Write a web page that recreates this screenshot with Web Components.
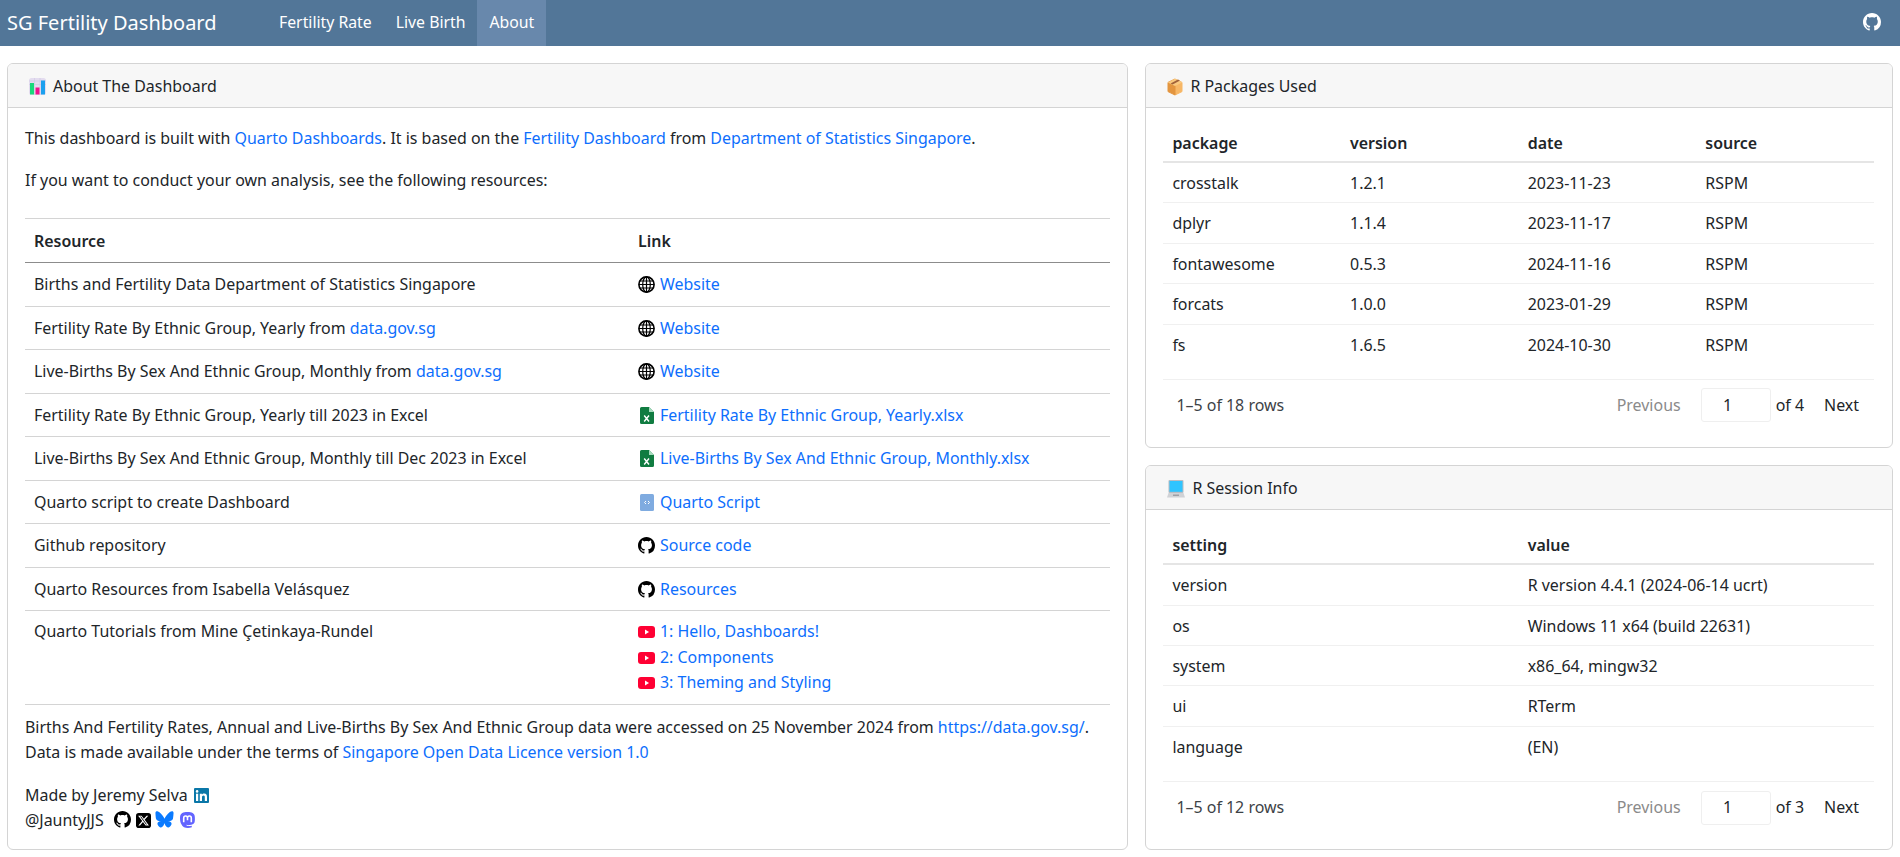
<!DOCTYPE html>
<html lang="en">
<head>
<meta charset="utf-8">
<title>SG Fertility Dashboard</title>
<style>
    html, body { margin: 0; height: 100%; }
    body {
        font-family: "Noto Sans", "Open Sans", sans-serif;
        font-size: 15.95px;
        line-height: 25px;
        color: #212529;
        background: #fff;
        overflow: hidden;
    }
    a { color: #0d6efd; text-decoration: none; }
    p { margin: 0 0 17px; }
</style>
</head>
<body>
<dash-page>
    <dash-navbar slot="nav" brand="SG Fertility Dashboard">
        <nav-item>Fertility Rate</nav-item>
        <nav-item>Live Birth</nav-item>
        <nav-item active>About</nav-item>
    </dash-navbar>

    <dash-card slot="left" heading="About The Dashboard" icon="chart">
        <p>This dashboard is built with <a href="#">Quarto Dashboards</a>. It is based on the <a href="#">Fertility Dashboard</a> from <a href="#">Department of Statistics Singapore</a>.</p>
        <p>If you want to conduct your own analysis, see the following resources:</p>
        <resource-table>
            <resource-row head><span>Resource</span><span slot="link">Link</span></resource-row>
            <resource-row><span>Births and Fertility Data Department of Statistics Singapore</span><icon-link slot="link" icon="globe">Website</icon-link></resource-row>
            <resource-row><span>Fertility Rate By Ethnic Group, Yearly from <a href="#">data.gov.sg</a></span><icon-link slot="link" icon="globe">Website</icon-link></resource-row>
            <resource-row><span>Live-Births By Sex And Ethnic Group, Monthly from <a href="#">data.gov.sg</a></span><icon-link slot="link" icon="globe">Website</icon-link></resource-row>
            <resource-row><span>Fertility Rate By Ethnic Group, Yearly till 2023 in Excel</span><icon-link slot="link" icon="excel">Fertility Rate By Ethnic Group, Yearly.xlsx</icon-link></resource-row>
            <resource-row><span>Live-Births By Sex And Ethnic Group, Monthly till Dec 2023 in Excel</span><icon-link slot="link" icon="excel">Live-Births By Sex And Ethnic Group, Monthly.xlsx</icon-link></resource-row>
            <resource-row><span>Quarto script to create Dashboard</span><icon-link slot="link" icon="script">Quarto Script</icon-link></resource-row>
            <resource-row><span>Github repository</span><icon-link slot="link" icon="github">Source code</icon-link></resource-row>
            <resource-row><span>Quarto Resources from Isabella Velásquez</span><icon-link slot="link" icon="github">Resources</icon-link></resource-row>
            <resource-row tall><span>Quarto Tutorials from Mine Çetinkaya-Rundel</span>
                <icon-link slot="link" icon="youtube">1: Hello, Dashboards!</icon-link>
                <icon-link slot="link" icon="youtube">2: Components</icon-link>
                <icon-link slot="link" icon="youtube">3: Theming and Styling</icon-link>
            </resource-row>
        </resource-table>
        <p style="margin-bottom:18px">Births And Fertility Rates, Annual and Live-Births By Sex And Ethnic Group data were accessed on 25 November 2024 from <a href="#">https://data.gov.sg/</a>.<br>Data is made available under the terms of <a href="#">Singapore Open Data Licence version 1.0</a></p>
        <p style="margin:0">Made by Jeremy Selva <doc-icon name="linkedin" style="margin-left:2px"></doc-icon><br>@JauntyJJS <doc-icon name="github" style="margin-left:6px"></doc-icon> <doc-icon name="x" style="margin-left:1px"></doc-icon> <doc-icon name="bluesky"></doc-icon> <doc-icon name="mastodon" style="margin-left:2px"></doc-icon></p>
    </dash-card>

    <dash-card slot="top" heading="R Packages Used" icon="package" fill>
        <paged-table widths="1fr 1fr 1fr 1fr" total="18" pages="4"
            data='[["package","version","date","source"],["crosstalk","1.2.1","2023-11-23","RSPM"],["dplyr","1.1.4","2023-11-17","RSPM"],["fontawesome","0.5.3","2024-11-16","RSPM"],["forcats","1.0.0","2023-01-29","RSPM"],["fs","1.6.5","2024-10-30","RSPM"]]'></paged-table>
    </dash-card>

    <dash-card slot="bottom" heading="R Session Info" icon="laptop" fill>
        <paged-table widths="1fr 1fr" total="12" pages="3"
            data='[["setting","value"],["version","R version 4.4.1 (2024-06-14 ucrt)"],["os","Windows 11 x64 (build 22631)"],["system","x86_64, mingw32"],["ui","RTerm"],["language","(EN)"]]'></paged-table>
    </dash-card>
</dash-page>

<script>
const GITHUB = 'M8 0C3.58 0 0 3.58 0 8c0 3.54 2.29 6.53 5.47 7.59.4.07.55-.17.55-.38 0-.19-.01-.82-.01-1.49-2.01.37-2.53-.49-2.69-.94-.09-.23-.48-.94-.82-1.13-.28-.15-.68-.52-.01-.53.63-.01 1.08.58 1.23.82.72 1.21 1.87.87 2.33.66.07-.52.28-.87.51-1.07-1.78-.2-3.64-.89-3.64-3.95 0-.87.31-1.59.82-2.15-.08-.2-.36-1.02.08-2.12 0 0 .67-.21 2.2.82.64-.18 1.32-.27 2-.27.68 0 1.36.09 2 .27 1.53-1.04 2.2-.82 2.2-.82.44 1.1.16 1.92.08 2.12.51.56.82 1.27.82 2.15 0 3.07-1.87 3.75-3.65 3.95.29.25.54.73.54 1.48 0 1.07-.01 1.93-.01 2.2 0 .21.15.46.55.38A8.013 8.013 0 0016 8c0-4.42-3.58-8-8-8z';

const ICONS = {
    github: `<svg viewBox="0 0 16 16" width="17" height="17"><path fill="currentColor" d="${GITHUB}"/></svg>`,
    globe: `<svg viewBox="0 0 17 17" width="17" height="17" fill="none" stroke="#000" stroke-width="1.2">
        <circle cx="8.5" cy="8.5" r="7.6" stroke-width="1.6"/><ellipse cx="8.5" cy="8.5" rx="3.8" ry="7.6"/>
        <path d="M8.5 1v15M1 8.5h15M1.8 5h13.4M1.8 12h13.4"/></svg>`,
    excel: `<svg viewBox="0 0 14 17" width="14" height="17"><path fill="#107c41" d="M1.5 0H9l5 5v10.5a1.5 1.5 0 0 1-1.5 1.5h-11A1.5 1.5 0 0 1 0 15.5v-14A1.5 1.5 0 0 1 1.5 0z"/>
        <path fill="#a5dcbd" d="M9 0l5 5H9z"/><path stroke="#fff" stroke-width="1.4" fill="none" d="M4.2 8.5l4.8 6M9 8.5l-4.8 6"/></svg>`,
    script: `<svg viewBox="0 0 14 17" width="14" height="17"><rect width="14" height="17" rx="1.5" fill="#7fabe0"/><path fill="none" stroke="#fff" stroke-width="1" d="M6 7L4.5 8.5 6 10M8 7l1.5 1.5L8 10"/></svg>`,
    youtube: `<svg viewBox="0 0 17 12" width="17" height="12"><rect width="17" height="12" rx="3" fill="#ff0033"/><path fill="#fff" d="M7 3.5l4 2.5-4 2.5z"/></svg>`,
    linkedin: `<svg viewBox="0 0 15 15" width="15" height="15"><rect width="15" height="15" rx="1" fill="#0a77a8"/><rect x="2" y="5.7" width="2.2" height="7.3" fill="#fff"/><circle cx="3.1" cy="3.4" r="1.3" fill="#fff"/><path fill="#fff" d="M5.8 5.7h2.1v1c.4-.7 1.2-1.2 2.3-1.2 2.2 0 2.8 1.4 2.8 3.4V13h-2.2V9.3c0-1-.2-1.8-1.2-1.8S8 8.3 8 9.3V13H5.8z"/></svg>`,
    x: `<svg viewBox="0 0 24 24" width="15" height="15"><rect width="24" height="24" rx="4.5" fill="#000"/><path fill="#fff" transform="translate(2.4 2.4) scale(.8)" d="M18.244 2.25h3.308l-7.227 8.26 8.502 11.24H16.17l-5.214-6.817L4.99 21.75H1.68l7.73-8.835L1.254 2.25H8.08l4.713 6.231zm-1.161 17.52h1.833L7.084 4.126H5.117z"/></svg>`,
    bluesky: `<svg viewBox="0 0 18.5 17" width="19" height="17"><path fill="#0a7aff" d="M4.2 1.3C6.3 2.9 8.6 6.1 9.25 7.7 9.9 6.1 12.2 2.9 14.3 1.3c1.5-1.1 4-2 4 .8 0 .6-.3 4.7-.5 5.4-.7 2.3-3 2.9-5.1 2.6 3.7.6 4.6 2.7 2.6 4.8-3.8 3.9-5.5-1-5.9-2.3-.1-.2-.15-.3-.15-.25 0-.05-.05.05-.15.25-.4 1.3-2.1 6.2-5.9 2.3-2-2.1-1.1-4.2 2.6-4.8-2.1.3-4.4-.3-5.1-2.6-.2-.7-.5-4.8-.5-5.4 0-2.8 2.5-1.9 4-.8z"/></svg>`,
    mastodon: `<svg viewBox="0 0 15 16" width="15" height="16"><path fill="#6364ff" d="M7.5 0C11.8 0 14.6 1.2 14.8 4.8c.2 2.8.1 4.5-.3 5.7-.6 1.7-2.6 2.4-4.8 2.6-1.4.1-2.5 0-3.4-.3.2 1 1.3 1.3 2.5 1.3 1 0 2-.1 3-.4v1.5c-1.2.6-2.6.8-3.9.8-2.7-.1-5.5-1-6.5-3.8C.1 10-.1 7.5.1 4.8.4 1.2 3.2 0 7.5 0z"/><path fill="none" stroke="#fff" stroke-width="1.6" d="M3.7 10.2V5.9c0-2.6 3.8-2.6 3.8 0v2.3-2.3c0-2.6 3.8-2.6 3.8 0v4.3"/></svg>`,
    chart: `<svg viewBox="0 0 17 17" width="17" height="17"><rect width="17" height="17" rx="2.5" fill="#e3dcef"/><path stroke="#cfc6e2" stroke-width=".6" d="M0 3h17M0 6.5h17M5.5 0v17M11 0v17"/><rect x="1" y="5" width="4" height="11.5" fill="#19d97b"/><rect x="6.5" y="9.5" width="4" height="7" fill="#f0128c"/><rect x="12" y="2.5" width="4" height="14" fill="#1ba0ee"/></svg>`,
    package: `<svg viewBox="0 0 16 18" width="16" height="18"><path fill="#f7b766" stroke="#f7b766" stroke-width="1" stroke-linejoin="round" d="M8 1l7 3.4v9.2L8 17z"/><path fill="#e3953f" stroke="#e3953f" stroke-width="1" stroke-linejoin="round" d="M8 1L1 4.4v9.2L8 17z"/><path fill="#f9c97f" d="M8 .8l7.2 3.6L8 8 .8 4.400z"/><path fill="#a0623a" d="M11 1.6l2 1-7.4 3.800-2-1z"/></svg>`,
    laptop: `<svg viewBox="0 0 18 18" width="18" height="18"><rect x="1.5" y="0" width="15" height="13" rx="1" fill="#b9bcc2"/><rect x="2.5" y="1" width="13" height="10.8" fill="#2fc4ff"/><path fill="#d0d2d6" d="M1.5 13h15l1.5 4.5H0z"/><rect x="6" y="14.5" width="6" height="1.5" fill="#9da0a6"/></svg>`
};

class DocIcon extends HTMLElement {
    connectedCallback() {
        this.attachShadow({ mode: 'open' }).innerHTML = `
            <style>
                :host { display: inline-flex; vertical-align: -1.5px; color: #000; }
                svg { display: block; }
            </style>
            ${ICONS[this.getAttribute('name')] || ''}`;
    }
}

class DashPage extends HTMLElement {
    constructor() {
        super();
        this.attachShadow({ mode: 'open' }).innerHTML = `
            <style>
                :host { display: flex; flex-direction: column; height: 100vh; }
                main {
                    flex: 1;
                    min-height: 0;
                    display: grid;
                    grid-template-columns: 3fr 2fr;
                    grid-template-rows: 1fr 1fr;
                    gap: 17.5px 17px;
                    padding: 17px 7px 7px;
                }
                .left { grid-row: 1 / 3; display: flex; }
                .cell { display: flex; min-height: 0; }
            </style>
            <slot name="nav"></slot>
            <main>
                <div class="left"><slot name="left"></slot></div>
                <div class="cell"><slot name="top"></slot></div>
                <div class="cell"><slot name="bottom"></slot></div>
            </main>`;
    }
}

class DashNavbar extends HTMLElement {
    connectedCallback() {
        this.attachShadow({ mode: 'open' }).innerHTML = `
            <style>
                :host {
                    display: flex;
                    align-items: stretch;
                    height: 46px;
                    background: #527698;
                    color: #fff;
                    padding-left: 7px;
                    padding-right: 19px;
                }
                .brand { font-size: 20px; line-height: 45px; width: 260px; }
                nav { display: flex; flex: 1; font-size: 15.8px; }
                .gh { display: flex; align-items: center; color: #fff; padding-bottom: 2px; }
                svg { display: block; }
            </style>
            <div class="brand">${this.getAttribute('brand')}</div>
            <nav><slot></slot></nav>
            <div class="gh">${ICONS.github.replace('width="17" height="17"', 'width="18" height="18"')}</div>`;
    }
}

class NavItem extends HTMLElement {
    constructor() {
        super();
        this.attachShadow({ mode: 'open' }).innerHTML = `
            <style>
                :host { display: flex; align-items: center; padding: 0 12px 2px; color: #fff; }
                :host([active]) { background: #6888ac; }
            </style>
            <slot></slot>`;
    }
}

class DashCard extends HTMLElement {
    connectedCallback() {
        this.attachShadow({ mode: 'open' }).innerHTML = `
            <style>
                :host {
                    display: flex;
                    flex-direction: column;
                    flex: 1;
                    min-width: 0;
                    border: 1px solid #d4d4d4;
                    border-radius: 6px;
                    overflow: hidden;
                    background: #fff;
                }
                header {
                    display: flex;
                    align-items: center;
                    gap: 7px;
                    box-sizing: border-box;
                    height: 44px;
                    padding: 2px 21px 0;
                    background: #f7f7f7;
                    border-bottom: 1px solid #d4d4d4;
                }
                svg { display: block; }
                .body { flex: 1; min-height: 0; padding: 18px 17px 17px; display: flex; flex-direction: column; }
            </style>
            <header>${ICONS[this.getAttribute('icon')]}<span>${this.getAttribute('heading')}</span></header>
            <div class="body"><slot></slot></div>`;
    }
}

class ResourceTable extends HTMLElement {
    constructor() {
        super();
        this.attachShadow({ mode: 'open' }).innerHTML = `
            <style>
                :host { display: block; margin: 8px 0 10px; border-top: 1px solid #d4d4d4; }
            </style>
            <slot></slot>`;
    }
}

class ResourceRow extends HTMLElement {
    constructor() {
        super();
        this.attachShadow({ mode: 'open' }).innerHTML = `
            <style>
                :host {
                    display: grid;
                    grid-template-columns: 605px 1fr;
                    box-sizing: border-box;
                    height: 43.5px;
                    border-bottom: 1px solid #d4d4d4;
                    padding: 9px 0 0;
                }
                :host([head]) { height: 44px; border-bottom-color: #8c8c8c; font-weight: 600; padding-top: 10px; }
                :host([tall]) { height: 94px; padding-top: 8px; }
                div { padding: 0 9px; }
                .link { padding-left: 8px; line-height: 25.7px; }
            </style>
            <div><slot></slot></div>
            <div class="link"><slot name="link"></slot></div>`;
    }
}

class IconLink extends HTMLElement {
    connectedCallback() {
        const icon = this.getAttribute('icon');
        this.attachShadow({ mode: 'open' }).innerHTML = `
            <style>
                :host { display: flex; align-items: center; color: #0d6efd; }
                .ic { width: 17px; display: flex; justify-content: center; margin-right: 5px; color: #000; }
                svg { display: block; }
            </style>
            <span class="ic">${ICONS[icon]}</span><slot></slot>`;
    }
}

class PagedTable extends HTMLElement {
    connectedCallback() {
        const data = JSON.parse(this.getAttribute('data'));
        const widths = this.getAttribute('widths');
        const row = (cells, cls) => `<div class="row ${cls}">${cells.map(c => `<div>${c}</div>`).join('')}</div>`;
        this.attachShadow({ mode: 'open' }).innerHTML = `
            <style>
                :host { display: flex; flex-direction: column; flex: 1; min-height: 0; margin: -1px 1px 0 0; }
                .rows { flex: 1; }
                .row {
                    display: grid;
                    grid-template-columns: ${widths};
                    box-sizing: border-box;
                    height: 40.4px;
                    padding-top: 1.5px;
                    align-items: center;
                    border-bottom: 1px solid #f0f0f0;
                }
                .row > div { padding: 0 9px; }
                .row.head { height: 38px; padding-top: 0; font-weight: 600; border-bottom: 2px solid #e5e5e5; }
                .row:last-child { border-bottom: 0; }
                .pager {
                    display: flex;
                    align-items: center;
                    height: 51px;
                    box-sizing: border-box;
                    border-top: 1px solid #f0f0f0;
                    padding: 1px 15px 0 13px;
                }
                .count { flex: 1; color: #3d4246; }
                .prev { color: #8a8a8a; }
                .num {
                    box-sizing: border-box;
                    width: 70px;
                    height: 34px;
                    margin: 0 5px 0 20px;
                    border: 1px solid #efefef;
                    border-radius: 3px;
                    display: flex;
                    align-items: center;
                    justify-content: center;
                    padding-right: 16px;
                }
                .next { margin-left: 20px; }
            </style>
            <div class="rows">
                ${row(data[0], 'head')}
                ${data.slice(1).map(r => row(r, '')).join('')}
            </div>
            <div class="pager">
                <span class="count">1–5 of ${this.getAttribute('total')} rows</span>
                <span class="prev">Previous</span>
                <span class="num">1</span>
                <span>of ${this.getAttribute('pages')}</span>
                <span class="next">Next</span>
            </div>`;
    }
}

customElements.define('doc-icon', DocIcon);
customElements.define('dash-page', DashPage);
customElements.define('dash-navbar', DashNavbar);
customElements.define('nav-item', NavItem);
customElements.define('dash-card', DashCard);
customElements.define('resource-table', ResourceTable);
customElements.define('resource-row', ResourceRow);
customElements.define('icon-link', IconLink);
customElements.define('paged-table', PagedTable);
</script>
</body>
</html>
